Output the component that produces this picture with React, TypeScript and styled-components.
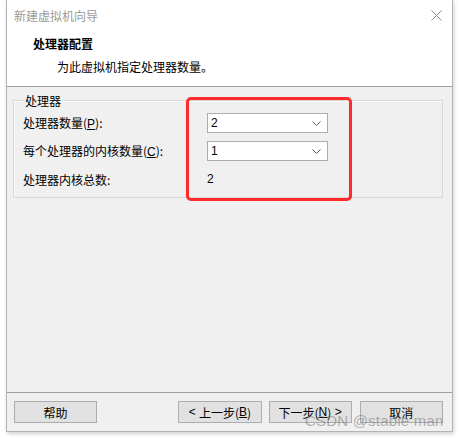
import React from "react";
import styled, { createGlobalStyle } from "styled-components";

const Global = createGlobalStyle`
  html, body { margin: 0; padding: 0; background: #ffffff; }
  body { font-family: "Noto Sans CJK SC", "Microsoft YaHei", sans-serif; font-size: 12px; color: #000; }
`;

const Stage = styled.div`
  position: relative;
  width: 460px;
  height: 438px;
  overflow: hidden;
  background: #ffffff;
`;

const Window = styled.div`
  position: absolute;
  left: 6px;
  top: 0;
  width: 447px;
  height: 432px;
  box-sizing: border-box;
  border: 1px solid #b4b4b4;
  border-top: none;
  background: #f0f0f0;
  display: flex;
  flex-direction: column;
  box-shadow: 1px 2px 4px rgba(0, 0, 0, 0.18);
`;

const TitleBar = styled.div`
  height: 30px;
  background: #fff;
  display: flex;
  align-items: center;
  justify-content: space-between;
  padding: 0 10px 0 7px;
`;

const TitleText = styled.span`
  color: #9a9a9a;
  font-size: 12px;
`;

const Header = styled.div`
  height: 56px;
  background: #fff;
  border-bottom: 1px solid #a0a0a0;
  padding-left: 26px;
  display: flex;
  flex-direction: column;
`;

const HeaderTitle = styled.div`
  font-weight: bold;
  font-size: 12px;
  line-height: 17px;
  margin-top: 5px;
`;

const HeaderSub = styled.div`
  font-size: 12px;
  line-height: 17px;
  margin-top: 6px;
  padding-left: 24px;
`;

const Body = styled.div`
  flex: 1;
  padding: 5px 9px 0 6px;
`;

const Group = styled.fieldset`
  margin: 0;
  padding: 4px 0 8px 9px;
  border: 1px solid #d9d9d9;
  box-shadow: inset 1px 1px 0 #fafafa;
`;

const Legend = styled.legend`
  padding: 0 1px;
  margin-left: 1px;
  font-size: 12px;
  line-height: 17px;
`;

const Grid = styled.div`
  display: grid;
  grid-template-columns: 184px 121px;
  grid-auto-rows: 20px;
  row-gap: 8px;
  align-items: center;
`;

const Label = styled.span`
  font-size: 12px;
  line-height: 17px;
`;

const Value = styled.span`
  font-family: "Liberation Sans", Arial, sans-serif;
  font-size: 12px;
`;

const Combo = styled.div`
  height: 20px;
  box-sizing: border-box;
  border: 1px solid #acacac;
  background: #fff;
  display: flex;
  align-items: center;
  justify-content: space-between;
  padding: 0 6px 0 3px;
  font-family: "Liberation Sans", Arial, sans-serif;
  font-size: 12px;
`;

const Footer = styled.div`
  border-top: 1px solid #a0a0a0;
  padding: 8px 9px 8px 7px;
  display: flex;
  align-items: center;
`;

const Button = styled.div<{ $gap?: number }>`
  width: 84px;
  height: 22px;
  box-sizing: border-box;
  border: 1px solid #adadad;
  background: #e1e1e1;
  display: flex;
  align-items: center;
  justify-content: center;
  font-size: 12px;
  margin-left: ${(p) => p.$gap ?? 0}px;
  color: #000;
`;

const U = styled.span`
  text-decoration: underline;
  font-family: "Liberation Sans", Arial, sans-serif;
`;

const Latin = styled.span`
  font-family: "Liberation Sans", Arial, sans-serif;
`;

const RedBox = styled.div`
  position: absolute;
  left: 186px;
  top: 97px;
  width: 166px;
  height: 104px;
  box-sizing: border-box;
  border: 3px solid #ff2a2a;
  border-radius: 5px;
`;

const Watermark = styled.div`
  position: absolute;
  left: 305px;
  top: 412px;
  font-family: "Liberation Sans", Arial, sans-serif;
  font-size: 15px;
  color: rgba(110, 110, 110, 0.5);
  letter-spacing: 0.2px;
  white-space: nowrap;
`;

const Chevron = () => (
  <svg width="9" height="5" viewBox="0 0 9 5">
    <path d="M0.5 0.5 L4.5 4.5 L8.5 0.5" fill="none" stroke="#555" strokeWidth="1" />
  </svg>
);

const CloseIcon = () => (
  <svg width="11" height="11" viewBox="0 0 11 11">
    <path d="M0.5 0.5 L10.5 10.5 M10.5 0.5 L0.5 10.5" stroke="#8a8a8a" strokeWidth="1" />
  </svg>
);

export default function App() {
  return (
    <Stage>
      <Global />
      <Window>
        <TitleBar>
          <TitleText>新建虚拟机向导</TitleText>
          <CloseIcon />
        </TitleBar>
        <Header>
          <HeaderTitle>处理器配置</HeaderTitle>
          <HeaderSub>为此虚拟机指定处理器数量。</HeaderSub>
        </Header>
        <Body>
          <Group>
            <Legend>处理器</Legend>
            <Grid>
              <Label>
                处理器数量(<U>P</U>):
              </Label>
              <Combo>
                <span>2</span>
                <Chevron />
              </Combo>
              <Label>
                每个处理器的内核数量(<U>C</U>):
              </Label>
              <Combo>
                <span>1</span>
                <Chevron />
              </Combo>
              <Label>处理器内核总数:</Label>
              <Value>2</Value>
            </Grid>
          </Group>
        </Body>
        <Footer>
          <Button>帮助</Button>
          <Button $gap={81}>
            <Latin>&lt;&nbsp;</Latin>上一步(<U>B</U>)
          </Button>
          <Button $gap={7}>
            下一步(<U>N</U>)<Latin>&nbsp;&gt;</Latin>
          </Button>
          <Button $gap={8}>取消</Button>
        </Footer>
      </Window>
      <RedBox />
      <Watermark>CSDN @stable man</Watermark>
    </Stage>
  );
}
